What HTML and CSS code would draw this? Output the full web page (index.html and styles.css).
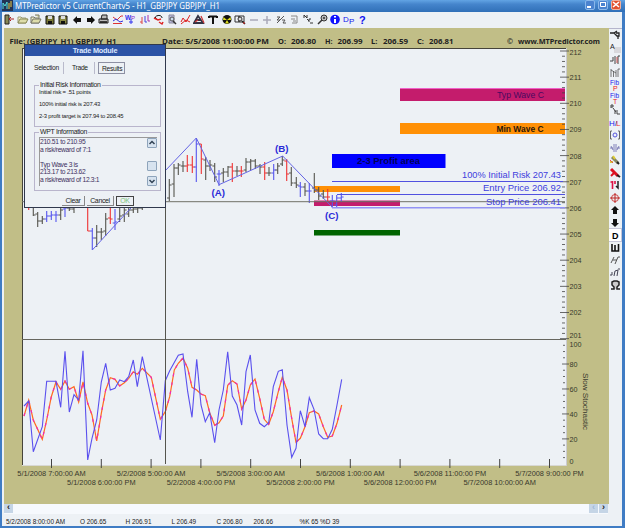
FILE: index.html
```html
<!DOCTYPE html>
<html lang="en">
<head>
    <meta charset="UTF-8">
    <title>MTPredictor v5</title>
    <link rel="stylesheet" href="styles.css">
</head>
<body>
<div class="window">
    <header class="titlebar">
        <svg class="logo" width="11" height="11"><path d="M0 0h11v11H0z" fill="#235"/><path d="M1 9V3l2 3 2-4v7" stroke="#5dd" fill="none"/><path d="M7 9V3M9 7V1" stroke="#ec4"/></svg>
        <svg class="title" width="208" height="12"><text x="0" y="8.6" textLength="205" lengthAdjust="spacingAndGlyphs">MTPredictor v5 CurrentChartv5 - H1_GBPJPY GBPJPY_H1</text></svg>
        <div class="win-buttons">
            <span><svg width="10" height="10"><path d="M2 7h4" stroke="#fff" stroke-width="2"/></svg></span>
            <span><svg width="10" height="10"><path d="M2.5 2.5h5v4h-5zM2 2.5h6" stroke="#fff" fill="none"/></svg></span>
            <span class="close"><svg width="10" height="10"><path d="M2 2l6 5M8 2L2 7" stroke="#fff" stroke-width="1.6"/></svg></span>
        </div>
    </header>

    <nav class="toolbar">
        <svg><path d="M2 1h4v9H2z" fill="#885" stroke="#222"/><path d="M11 5H6m2-2L6 5l2 2" stroke="#a22" fill="none"/></svg>
        <svg><path d="M1 9V3h3l1 1h4v5z" fill="#eec" stroke="#997"/><path d="M1 9l2-4h8L9 9z" fill="#dda" stroke="#885"/></svg>
        <svg><path d="M1 9V3h3l1 1h4v5z" fill="#eec" stroke="#776"/><path d="M5 1h4v3M1 9l2-4h8L9 9z" fill="#dda" stroke="#776"/></svg>
        <svg><path d="M2 2h8v8H2z" fill="#773" stroke="#111"/><path d="M4 2h4v3H4z" fill="#ddd"/><path d="M4 7h4v3H4z" fill="#111"/></svg>
        <svg><path d="M2 2h8v8H2z" fill="#884" stroke="#111"/><path d="M4 2h4v3H4z" fill="#ddd"/><path d="M4 7h4v3H4z" fill="#111"/></svg>
        <svg><path d="M2 6l4-4v2h4v4H6v2z" fill="#111"/></svg>
        <svg><path d="M10 6L6 2v2H2v4h4v2z" fill="#111"/></svg>
        <svg><path d="M4 1h5v4H3zM1 5h9v4H1z" fill="#bbb" stroke="#222"/><path d="M2 8h7" stroke="#111" stroke-width="1.5"/></svg>
        <svg><path d="M1 3l4 3 4-4h2M1 9.500h9" stroke="#d33" fill="none"/><path d="M1 7l3-2 4 3 3-1" stroke="#33d" fill="none"/></svg>
        <svg><text x="0" y="6" font-size="6.5" fill="#33e" font-weight="bold">W</text><text x="6" y="6" font-size="6" fill="#82c">P</text><path d="M6 5v5m-2-2h4" stroke="#33e"/></svg>
        <svg><path d="M3 3v7M1 8h2" stroke="#d44"/><path d="M6 2v6h2" stroke="#44d" fill="none"/><path d="M9 1v6h2" stroke="#a3a" fill="none"/></svg>
        <svg><path d="M2 5C1 1 9 0 9 4M2 3l2 3" stroke="#111" fill="none"/><path d="M1 4l4 2 3-1M6 8l3 2 1-2" stroke="#d22" stroke-width="1.5" fill="none"/></svg>
        <svg><path d="M3 1h5v8H3z" fill="#bbd" stroke="#889"/><circle cx="6" cy="5" r="2" fill="#cde" stroke="#555"/><path d="M7 7l3 3" stroke="#333" stroke-width="1.5"/></svg>
        <svg><path d="M1 8l2-4 3 4 4-7M1 10l5-4 4 2" stroke="#d22" fill="none"/></svg>
        <svg><path d="M1 9l4-7 5 7zM3 6h5" stroke="#334" stroke-width="1.8" fill="none"/><path d="M2 8l3-2M8 2l3 7" stroke="#c33" stroke-width="1.2"/></svg>
        <svg><path d="M2 2.5h8M6 2v8M2 2v2M10 2v2" stroke="#111" stroke-width="2"/></svg>
        <svg><circle cx="6" cy="5.5" r="4.5" fill="#111"/><path d="M6 6L2.5 3 2 6zM6 6l3.5-3 .5 3zM6 6l-2 3.5h4z" fill="#dd2"/></svg>
        <svg><path d="M1 2h4v6H1zM5 2h5v6H5z" fill="none" stroke="#333"/><circle cx="6" cy="5" r="2" fill="#ddd" stroke="#333"/><path d="M8 7l3 3" stroke="#222" stroke-width="1.5"/><path d="M10 8v2" stroke="#d22"/></svg>
        <svg><path d="M2 6h8" stroke="#a9a9b9" stroke-width="1.5"/></svg>
        <svg><path d="M2 6h8M6 2v8" stroke="#a9a9b9" stroke-width="1.5"/></svg>
        <svg><path d="M2 9l7-7M2 3h3L2 6h3M7 6h3L8 9h3" stroke="#555" fill="none"/></svg>
        <svg><path d="M3 2h6v7H4M3 5h4M5 7h3" stroke="#888" fill="none"/></svg>
        <svg><path d="M2 4V1l3 3V1M5 5l2 2M7 8V5h2M8 9h3" stroke="#333" fill="none"/></svg>
        <svg><circle cx="8" cy="4" r="3" fill="#bbb" stroke="#333"/><path d="M6 6l-4 4M7 4h2" stroke="#333" stroke-width="1.5"/></svg>
        <svg><circle cx="6" cy="5.5" r="4.8" fill="#11f"/><path d="M6 5v4M6 2v1.5" stroke="#fff" stroke-width="2"/></svg>
        <svg><text x="0" y="8" font-size="8" fill="#11e">D</text><text x="6" y="10" font-size="8" fill="#11e">P</text></svg>
        <svg><text x="3" y="10" font-size="11" fill="#11e" font-weight="bold">?</text></svg>
    </nav>

    <main class="workspace">
        <div class="chart-panel">
            <svg id="chart" width="605" height="476" viewBox="4 28 605 476"></svg>

            <section class="dialog">
                <h2>Trade Module</h2>
                <div class="tabs"><span>Selection</span><span>Trade</span><span class="active">Results</span></div>
                <fieldset class="risk">
                    <legend>Initial Risk Information</legend>
                    <p>Initial risk = .51 points</p>
                    <p>100% initial risk is 207.43</p>
                    <p>2-3 profit target is 207.94 to 208.45</p>
                </fieldset>
                <fieldset class="wpt">
                    <legend>WPT Information</legend>
                    <div class="memo">
                        <div class="lines">
                            <div>210.51 to 210.95</div>
                            <div>a risk/reward of 7:1</div>
                            <div>&nbsp;</div>
                            <div>Typ Wave 3 is</div>
                            <div>213.17 to 213.62</div>
                            <div>a risk/reward of 12.3:1</div>
                        </div>
                        <div class="vscroll">
                            <span><svg width="8" height="8"><path d="M1.5 5l2.5-2.5L6.5 5" stroke="#345" stroke-width="1.5" fill="none"/></svg></span>
                            <i></i>
                            <span><svg width="8" height="8"><path d="M1.5 3L4 5.5 6.5 3" stroke="#345" stroke-width="1.5" fill="none"/></svg></span>
                        </div>
                    </div>
                </fieldset>
                <div class="actions"><span>Clear</span><span>Cancel</span><span class="ok">OK</span></div>
            </section>
        </div>

        <aside class="tools">
            <svg><path d="M1 4h4l3-2M5 4l3 3h2V4H7M9 7v3" stroke="#222" stroke-width="1.3" fill="none"/></svg>
            <svg><path d="M5 5h7v6H5z" fill="#d8d8dc"/><text x="1" y="7" font-size="7" fill="#222">A</text></svg>
            <svg><path d="M1 7h3V3M6 2v8M9 10V2h2" stroke="#444" fill="none"/><path d="M8 3v6" stroke="#c55"/></svg>
            <svg><path d="M2 2v8M4.500 4v6M7 3v7M9 10V2h2M2 3l5 3" stroke="#555" stroke-width=".8" fill="none"/></svg>
            <svg><text x="1" y="5.5" font-size="6.5" fill="#22e">Fib</text><text x="4" y="11.5" font-size="7" fill="#e22">P</text></svg>
            <svg><text x="1" y="5.5" font-size="6.5" fill="#22e">Fib</text><text x="4" y="11.5" font-size="7" fill="#e22">T</text></svg>
            <svg><path d="M2 4V1h2v2H2M4 4l3 4M6 6v4M8 6v4h3" stroke="#444" fill="none"/></svg>
            <svg><text x="0" y="9" font-size="8" fill="#22e">H/</text><text x="7" y="9" font-size="8" fill="#e33">L</text></svg>
            <svg><path d="M3 2H1.500v8H3M9 2h1.500v8H9" stroke="#666" fill="none"/><circle cx="6" cy="6" r="2" stroke="#55d" fill="none"/></svg>
            <svg><path d="M1 6h3M8 6h3M5 2v8M7 2v8M2 4l2 4M10 4L8 8" stroke="#66a" stroke-width=".8" fill="none"/></svg>
            <svg><path d="M3 3l6 6" stroke="#886" stroke-width="3"/><path d="M8 8l2 2" stroke="#222" stroke-width="2"/><path d="M1 8h3M4 2l2 3" stroke="#dc3" stroke-width="2"/><path d="M1 6l3 3" stroke="#d55"/></svg>
            <svg><path d="M2 2l7 7" stroke="#d12" stroke-width="3"/><path d="M8 8l3 2" stroke="#222" stroke-width="2"/><path d="M2 9l3-3" stroke="#d12" stroke-width="2"/></svg>
            <svg><path d="M3.500 2v8M1.500 3h2M6 2v3" stroke="#d14" stroke-width="1.6" fill="none"/><path d="M9 2v7l-2-2" stroke="#222" stroke-width="1.5" fill="none"/></svg>
            <svg><circle cx="6" cy="6" r="3.5" stroke="#c44" fill="none"/><path d="M1 6h10M6 1v10" stroke="#b22"/></svg>
            <svg><path d="M6 2l4 4H8v4H4V6H2z" fill="#111"/></svg>
            <svg><path d="M6 10l4-4H8V2H4v4H2z" fill="#111"/></svg>
            <svg class="pressed"><text x="3" y="9.5" font-size="9" font-weight="bold">D</text></svg>
            <svg><path d="M3 2v7h6.500V2M6 3v6" stroke="#111" stroke-width="1.6" fill="none"/></svg>
            <svg><path d="M2 9l3-6M4 6h4M6 10l3-7M9 3h2" stroke="#555" fill="none"/></svg>
            <svg><path d="M1 8h2V5M5 9l1-5 3-1-1 6M9 2h2" stroke="#445" fill="none"/></svg>
            <svg><path d="M2 10h3V8L3 6V3l2-1h3l2 1v3L8 8v2h3" stroke="#222" stroke-width="1.5" fill="#ccc"/></svg>
        </aside>
    </main>

    <div class="hscroll"><span>‹</span><span class="thumb">‹</span><span>›</span></div>
    <footer class="status">
        <span>5/2/2008 8:00:00 AM</span><span>O 206.65</span><span>H 206.91</span><span>L 206.49</span><span>C 206.80</span><span>206.66</span><span>%K 65 %D 39</span>
    </footer>
</div>
<script src="chart.js"></script>
</body>
</html>
```
FILE: styles.css
```css
* {
    box-sizing: border-box;
}

body {
    margin: 0;
    width: 625px;
    height: 528px;
    overflow: hidden;
    font-family: "Liberation Sans", Arial, sans-serif;
    font-size: 7px;
    color: #222;
}

.window {
    height: 528px;
    display: flex;
    flex-direction: column;
    background: #edf1f5;
    border: solid #3f7cc4;
    border-width: 0 3px 2px 2px;
}

.titlebar {
    height: 12px;
    margin: 0 -3px 0 -2px;
    padding: 0 4px 0 2px;
    display: flex;
    background: linear-gradient(#62a4e4, #4585cc 35%, #3070b8);
}

.title {
    margin-left: 2px;
}

.title text {
    font: 8.2px "Noto Sans", sans-serif;
    fill: #fff;
}

.win-buttons {
    display: flex;
    gap: 3px;
    margin-left: auto;
}

.win-buttons span {
    width: 10px;
    height: 10px;
    background: #4b83cf;
    border: 1px solid #8ab8ea;
    border-radius: 2px;
}

.win-buttons svg {
    display: block;
    margin: -1px;
}

.win-buttons .close {
    background: #e0512f;
    border-color: #f3b09a;
}

.toolbar {
    height: 16px;
    padding: 1px 0 0 1px;
    display: flex;
    gap: 1.6px;
}

.toolbar svg,
.tools svg {
    width: 12px;
    height: 12px;
    flex: none;
    margin-top: 1px;
}

.workspace {
    height: 476px;
    display: flex;
    padding-left: 2px;
}

.chart-panel {
    position: relative;
    width: 605px;
    height: 476px;
    background: #c1be87;
}

#chart {
    display: block;
}

.tools {
    width: 13px;
    border-top: 1px solid #b5b5cc;
    display: flex;
    flex-direction: column;
    gap: .5px;
}

.tools svg {
    margin: 0;
}

.tools .pressed {
    background: #fff;
    outline: 1px solid #c6c6d8;
}

/* trade dialog, floats over the chart */
.dialog {
    position: absolute;
    left: 20px;
    top: 16px;
    width: 142px;
    height: 164px;
    background: #edf1f5;
    border: 1px solid #30384c;
    letter-spacing: -.3px;
}

.dialog h2 {
    margin: 0;
    height: 11px;
    line-height: 11px;
    font-size: 7.3px;
    text-align: center;
    color: #dde8ff;
    background: #2c53a6;
    letter-spacing: -.2px;
}

.tabs {
    display: flex;
    margin: 6px 0 0 9px;
}

.tabs span {
    width: 30px;
    height: 12px;
    line-height: 11px;
    margin-right: 8px;
    font-size: 6.7px;
    border-right: 1px solid #b9bacb;
}

.tabs span:nth-child(2) {
    width: 23px;
    margin-right: 3px;
}

.tabs .active {
    width: 27px;
    padding-left: 3px;
    border: 1px solid #8d90a3;
}

.dialog fieldset {
    margin: 0 4px 0 9px;
    padding: 0 0 0 4px;
    border: 1px solid #b9b5cc;
}

.dialog legend {
    padding: 0 1px;
    height: 8px;
    line-height: 8px;
    font-size: 6.9px;
}

.dialog .risk {
    margin-top: 7px;
    height: 46px;
}

.risk p {
    margin: 0 0 4.8px;
    height: 7.2px;
    line-height: 7px;
    font-size: 5.9px;
    letter-spacing: -.2px;
    white-space: nowrap;
}

.dialog .wpt {
    height: 63px;
    margin-top: 1px;
}

.memo {
    display: flex;
    justify-content: space-between;
    height: 49px;
    margin: 1px 3px 0 0;
    border-left: 1px solid #999;
    border-top: 1px solid #999;
}

.lines div {
    height: 7.5px;
    line-height: 8px;
    font-size: 6.7px;
    color: #403060;
}

.vscroll {
    width: 10px;
    display: flex;
    flex-direction: column;
    justify-content: space-between;
}

.vscroll span,
.vscroll i {
    height: 10px;
    border: 1px solid #8ea4bb;
    border-radius: 1px;
    background: #d7e3ef;
}

.vscroll i {
    margin-top: 8px;
}

.vscroll svg {
    display: block;
}

.actions {
    display: flex;
    gap: 2px;
    margin: 5px 0 0 37px;
}

.actions span {
    width: 23px;
    height: 10px;
    line-height: 9px;
    text-align: center;
    font-size: 6.9px;
    border-right: 1px solid #888;
    border-bottom: 1px solid #888;
}

.actions span:nth-child(2) {
    width: 27px;
}

.actions .ok {
    width: 18px;
    line-height: 8px;
    color: #7fc47a;
    border: 1px solid #444;
}

.hscroll {
    height: 10px;
    margin: 0 14px 0 2px;
    display: flex;
    background: #f6f9fd;
}

.hscroll span {
    width: 9px;
    height: 9px;
    line-height: 7px;
    font-size: 9px;
    font-weight: bold;
    text-align: center;
    background: #c5d5e6;
}

.hscroll .thumb {
    margin: 0 1px 0 auto;
    color: #9fb8d6;
}

.status {
    flex: 1;
    display: grid;
    grid-template-columns: 74px 45.5px 46px 45px 37px 46px auto;
    padding: 4px 0 0 4px;
    font-size: 6.4px;
    line-height: 8px;
    white-space: nowrap;
}
```
FILE: chart.js
```js
var out = [];

function line(x1, y1, x2, y2, color, w) {
    out.push('<path d="M' + x1 + ' ' + y1 + 'L' + x2 + ' ' + y2 + '" stroke="' + color + '" stroke-width="' + (w || 1) + '"/>');
}
function rect(x, y, w, h, color) {
    out.push('<rect x="' + x + '" y="' + y + '" width="' + w + '" height="' + h + '" fill="' + color + '"/>');
}
function text(x, y, s, len, size, color, extra) {
    out.push('<text x="' + x + '" y="' + y + '" textLength="' + len + '" lengthAdjust="spacingAndGlyphs" font-size="' + size + '" fill="' + color + '" ' + (extra || '') + '>' + s + '</text>');
}
function poly(pts, color, w, extra) {
    out.push('<polyline points="' + pts + '" fill="none" stroke="' + color + '" stroke-width="' + w + '" ' + (extra || '') + '/>');
}

// header
var head = 'font-weight="bold" font-family="Noto Sans, sans-serif"';
[[9.5, 'File: (GBPJPY_H1) GBPJPY_H1', 107], [162, 'Date: 5/5/2008 11:00:00 PM', 107],
 [278, 'O:', 8], [291, '206.80', 25], [325, 'H:', 7.5], [337.5, '206.99', 25],
 [371, 'L:', 6.5], [383, '206.59', 25], [417, 'C:', 7], [429, '206.81', 24.5],
 [507, '©', 6], [518, 'www.MTPredictor.com', 82]].forEach(function (h) {
    text(h[0], 44, h[1], h[2], 7.8, '#222', head);
});

// plot area
rect(22, 48, 544, 417, '#edf1f5');
line(22, 48.5, 566, 48.5, '#46443a');
line(22.5, 48, 22.5, 465, '#46443a');
line(22, 465.5, 567, 465.5, '#d8d8d4');
line(566.5, 48, 566.5, 466, '#ccccd0');

// wave and profit bands
rect(400, 88, 165, 13, '#c41c6c');
rect(400, 88, 165, 1, '#f060c8');
rect(400, 123, 165, 11, '#ff9005');
rect(332, 154, 113.5, 14, '#0000ff');
rect(314, 186, 86, 6, '#ff9005');
rect(314, 200.5, 86, 5.5, '#c41c6c');
rect(314, 230, 86, 5.5, '#006400');

// axes
for (var i = 0; i < 56; i++) {
    var y = 51 + i * 5.23;
    if (y < 339) line(i % 5 ? 562 : 560, y, i % 5 ? 565 : 569, y, '#444', .8);
}
for (i = 0; i < 12; i++) {
    text(569.5, i == 0 ? 55 : i == 11 ? 338.4 : 53.9 + i * 26.15, 212 - i, 12, 8, '#38382c');
}
for (i = 0; i < 19; i++) {
    line(i % 4 == 3 ? 562 : 563, 345.3 + i * 6.24, i % 4 == 3 ? 569 : 565, 345.3 + i * 6.24, '#444', .8);
}
[['100', 346.6], ['80', 367], ['60', 392], ['40', 417], ['20', 442], ['0', 463.5]].forEach(function (l) {
    text(569.5, l[1], l[0], l[0].length * 4, 8, '#38382c');
});
text(0, 0, 'Slow Stochastic', 57, 8, '#38382c', 'transform="translate(583 373) rotate(90)"');

['5/1/2008 7:00:00 AM', '5/1/2008 6:00:00 PM', '5/2/2008 5:00:00 AM', '5/2/2008 4:00:00 PM',
 '5/5/2008 3:00:00 AM', '5/5/2008 2:00:00 PM', '5/6/2008 1:00:00 AM', '5/6/2008 12:00:00 PM',
 '5/6/2008 11:00:00 PM', '5/7/2008 10:00:00 AM', '5/7/2008 9:00:00 PM'].forEach(function (s, i) {
    var x = 51.5 + i * 49.8, w = s.length > 19 ? 72.5 : 68.5;
    line(x, 459, x, 468, '#444');
    text(x - w / 2, i % 2 ? 484.5 : 476, s, w, 7.9, '#38382c');
});

// price bars: x, high, low, open, close, color
var G = '#55554e', R = '#ee3333', B = '#5555ee';
[[28.7,200,210,202,206,R],[33.3,200,216,206,215,G],[37.7,212,227,214,221,G],[42.3,216,224,221,219,G],
 [46.7,211,222,219,216,B],[51.3,211,220,216,215,B],[56,211,222,215,215,B],[60.7,208,220,215,210,G],
 [65,200,217,209,208,B],[69.3,200,211,208,209,G],[74,200,213,209,206,G],
 [87.7,200,231,206,231,R],[92.3,228,250,231,238,B],[96.7,225,247,238,232,G],[101.3,228,240,232,232,G],
 [105.7,213,236,231,219,G],[110.3,206,224,218,219,R],[115,209,230,223,222,B],[119.7,208,222,219,216,G],
 [124.3,205,222,215,210,G],[128.7,205,217,214,210,G],[133.3,204,213,210,209,G],[137.7,204,213,209,208,G],[142.3,204,210,208,207,G],
 [169.3,179,201,198,185,G],[174,164,197,184,168,G],[178.3,163,175,168,165,G],[183,161,172,166,166,G],
 [187.3,155,172,166,165,R],[192.3,156,173,165,167,R],[196.3,138,182,167,144,B],[201.3,144,174,144,159,R],
 [205.7,157,180,160,166,G],[210,160,171,166,165,G],[214.7,163,182,166,177,G],[219,170,186,174,174,B],
 [223.3,168,182,173,172,G],[228,166,177,172,167,G],[232.3,163,182,167,171,R],[237,166,176,171,171,G],
 [241.3,166,177,171,171,R],[246,158,172,170,162,G],[250.7,159,170,162,161,G],[255.3,159,169,161,166,G],
 [260,164,174,166,167,G],[264.7,162,180,167,173,R],[269,167,176,173,173,G],[273.7,164,180,173,170,B],
 [277.7,163,174,170,166,G],[282.3,156,166,164,160,G],[286.7,159,181,161,174,R],[291.3,167,186,173,183,G],
 [296.3,177,188,183,185,G],[300.3,182,197,186,187,B],[305,183,196,187,191,G],[309.3,183,203,191,191,B],
 [314.3,173,193,188,190,G],[318.7,187,200,190,196,G],[323.3,190,199,194,197,G],[327.7,189,201,197,197,R],
 [332.3,195,208,201,201,B],[336.7,195,208,205,198,B],[341.3,193,202,198,197,B]].forEach(function (b) {
    line(b[0], b[1], b[0], b[2], b[5], 1.1);
    line(b[0] - 2.3, b[3], b[0], b[3], b[5]);
    line(b[0], b[4], b[0] + 2.3, b[4], b[5]);
});

// zigzag and price levels
poly('92.3,250 165,171 196.3,138 219,184.7 282.7,156 332,207', '#6464e4', 1);
line(332, 181.5, 563, 181.5, '#5050e0');
line(337, 194.5, 565, 194.5, '#5050e0');
line(22, 201.7, 565, 201.7, '#707068');
line(332, 207.8, 565, 207.8, '#9393f5', 1.4);

text(462, 177.7, '100% Initial Risk 207.43', 99, 9.3, '#4040dd');
text(483, 191, 'Entry Price 206.92', 78, 9.3, '#4040dd');
text(486, 204.7, 'Stop Price 206.41', 75, 9.3, '#4040dd');
text(497, 97.8, 'Typ Wave C', 47, 8.8, '#4a0a60');
text(496.5, 131.5, 'Min Wave C', 47, 8.8, '#2b1708', 'font-weight="bold"');
text(357, 164, '2-3 Profit area', 63, 8.8, '#000058', 'font-weight="bold"');
text(211.5, 195.5, '(A)', 13.5, 9.5, '#2a2ad8', 'font-weight="bold"');
text(275, 151.5, '(B)', 13.5, 9.5, '#2a2ad8', 'font-weight="bold"');
text(325, 218.5, '(C)', 13.5, 9.5, '#2a2ad8', 'font-weight="bold"');

// slow stochastic, %D then %K
var d = '24,416 28.7,400 33.3,420 42.3,439.3 46.7,420 51.3,396.7 56,382 60.7,389.3 65,381 69.3,389.3 74,386.7 78.7,402 83,382 87.7,403.3 92,415 96.7,441 101.3,413.3 105.7,390 110.3,377.7 115,379.3 119.7,386 124.3,382.7 128.7,378.3 133.3,371.7 137.3,374.3 142.3,368.3 151.3,377.3 160.3,419.3 165.3,411.7 169.7,396.7 174.3,370 178.3,363.3 183,358 187.7,368.3 192,387.3 196.7,390 201,394 205.3,395.7 209.7,412.7 214.7,425.3 219,422.7 223.3,416 227.7,385.3 232.3,380.7 237,384 241.7,409 246,400 250.3,385 255,379 259.7,398.3 264.3,419.3 268.7,424.3 273.3,411.7 278.3,391.7 282.3,377.3 287,390 291.7,418.3 296,442.3 300.3,438.3 305,426.7 309.3,412.7 314,411 318.7,414 323.3,426.7 327.7,437.3 332.3,436 337,423.3 341.7,405';
var k = '24,406 28.7,401 33.3,451.7 42.3,426.7 46.7,381.3 56,381.3 60.7,407.3 65,351.3 69.3,412 74,394.7 78.7,400 83,350.7 87.7,460 92,438.3 96.7,420 101.3,382 105.7,363.3 110.3,390 115,388.3 119.7,380 124.3,381.7 128.7,376.7 133.3,360 137.3,386.7 142.3,356.7 160.3,440 165.3,380.7 169.7,370.7 178.3,355.3 183,354 187.7,391.7 192,417.3 196.7,359.3 201,405 205.3,421.7 209.7,412.7 214.7,442.7 219,410 223.3,390 227.7,351.7 232.3,396 237,405 241.7,425 246,371.7 250.3,355 255,410 259.7,423.3 264.3,426.7 268.7,422.7 273.3,386.7 278.3,371.3 282.3,369.7 287,425 291.7,457.3 296,448.3 300.3,410.7 305,426.7 309.3,397.7 314,409.3 318.7,434 323.3,438.7 327.7,438.7 332.3,429.3 337,405 341.7,379.3';
poly(d, '#ff6a1e', 1.2);
poly(d, '#f02cb0', 1.2, 'stroke-dasharray="3 6"');
poly(k, '#5a50ee', 1.1);

line(22, 339.5, 566, 339.5, '#66665e', 1.2);
line(165.5, 48, 165.5, 464, '#55554e');

document.getElementById('chart').innerHTML = out.join('');
```
